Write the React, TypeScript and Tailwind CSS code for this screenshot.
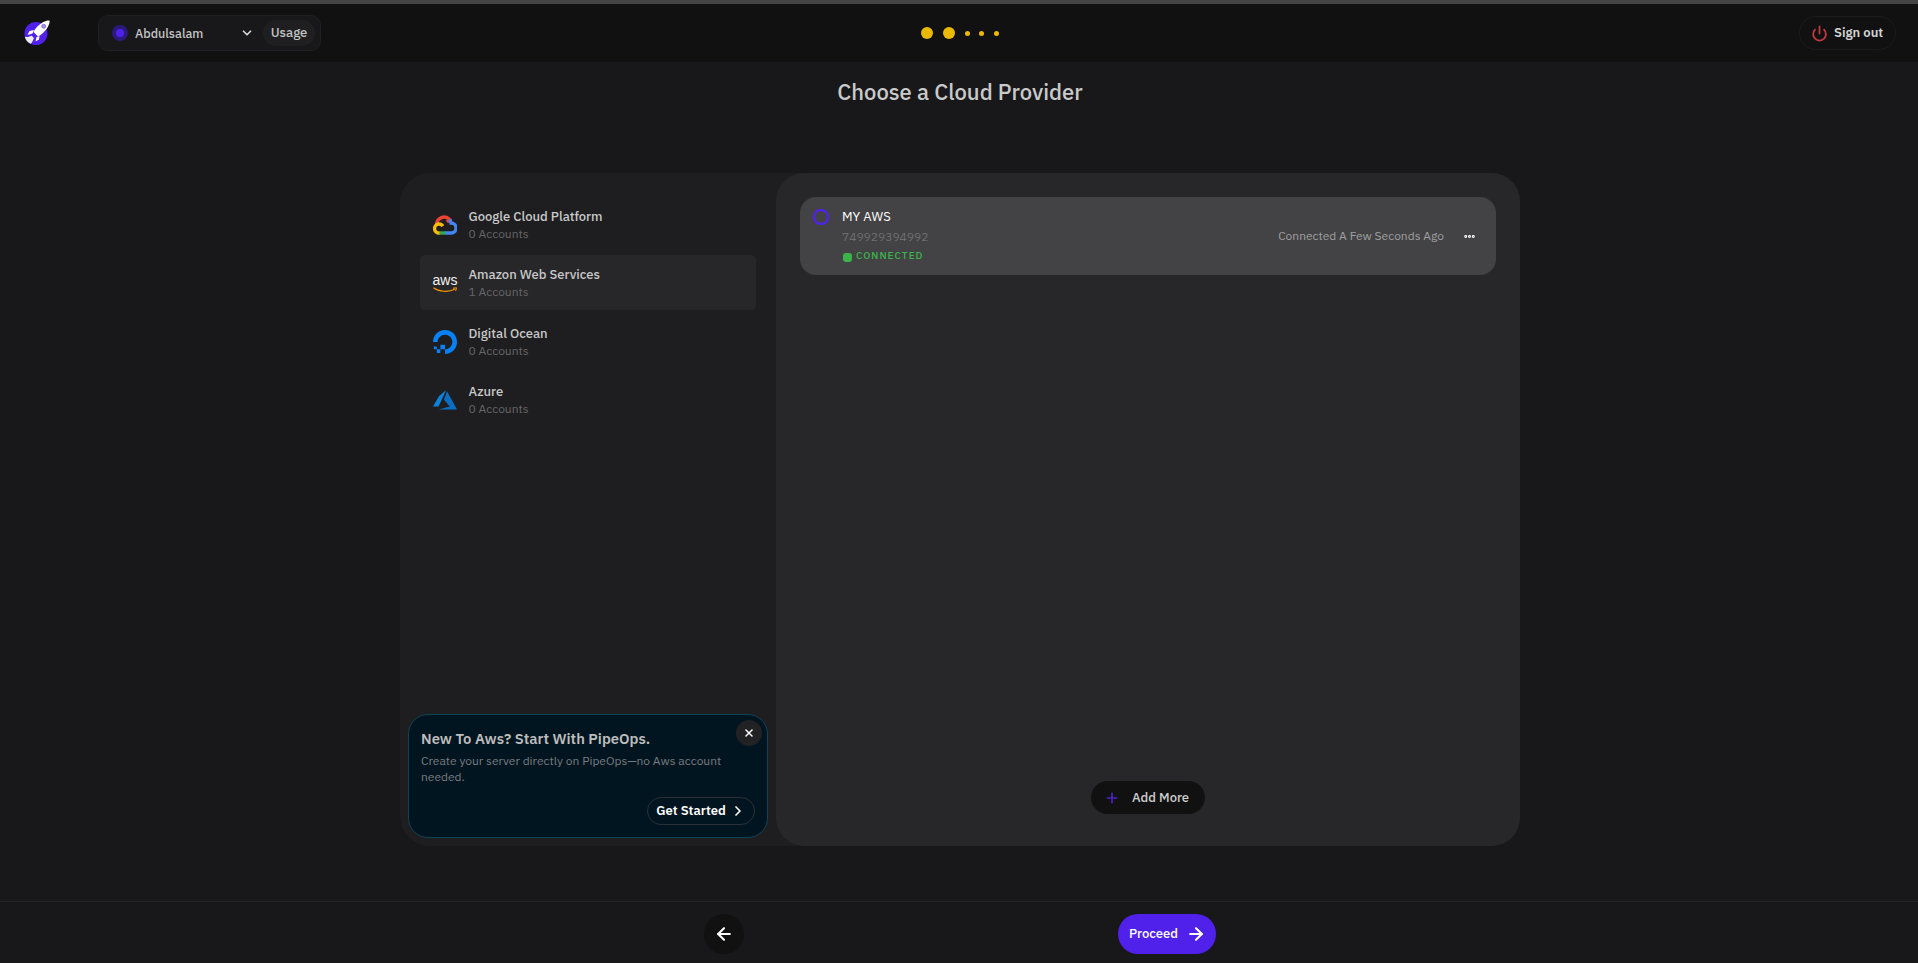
import { ChevronDown, ChevronRight, Power, Plus, X, Ellipsis, ArrowLeft, ArrowRight } from "lucide-react"
import { SiDigitalocean } from "react-icons/si"

const RocketLogo = () => (
    <svg viewBox="0 0 26 26" className="w-[26px] h-[26px]">
        <circle cx="12" cy="13.5" r="11.5" fill="#5021eb" />
        <path d="M9.5 12 C11 8 16 3.5 20.5 1.5 C22.5 0.6 25 0 25.5 0.8 C26 2 25 5 23.5 7.5 C21.5 11 18 14.5 14 16.5 Z" fill="#fff" />
        <circle cx="19.7" cy="6.3" r="2" fill="#a99bec" stroke="#5021eb" strokeWidth="0.5" />
        <path d="M10 10 L5.5 11 L3.5 15 L8.5 13.5 Z" fill="#fff" />
        <path d="M15.5 16 L15 19.5 L11.5 21.5 L12.5 17 Z" fill="#fff" />
        <path d="M0.8 16.5 C3 17.5 5 17 7.5 15.5 L10 18 C9 20.5 8 23 6.5 23.8 C3.5 22.5 1.2 19.5 0.8 16.5 Z" fill="#ecebf5" />
    </svg>
)

const GoogleCloudIcon = () => (
    <svg viewBox="0 0 24 20" className="w-6 h-5" fill="none" strokeWidth="3.4">
        <path d="M3.6 9.6 A7.6 7.6 0 0 1 16.6 4.4 L14 7" stroke="#ea4335" />
        <path d="M16.6 4.4 A7.6 7.6 0 0 1 18 8 A4.5 4.5 0 0 1 18.2 18 H12" stroke="#4285f4" />
        <path d="M12.4 18 H6" stroke="#34a853" />
        <path d="M6.4 18 A4.5 4.5 0 0 1 5.8 9 A4.5 4.5 0 0 1 9.8 11.2" stroke="#fbbc05" />
    </svg>
)

const AwsIcon = () => (
    <div className="w-6 flex flex-col items-center">
        <span className="text-[14px] leading-[13px] text-[#f2f2f2] font-['Liberation_Sans',sans-serif]">aws</span>
        <svg viewBox="0 0 24 6" className="w-6 h-[6px]" fill="none">
            <path d="M0.5 0.8 C6 5 16 5.4 22 2" stroke="#f90" strokeWidth="1.2" />
            <path d="M20 1.2 L23.5 0.8 L22.6 4" stroke="#f90" strokeWidth="1" />
        </svg>
    </div>
)

const AzureIcon = () => (
    <svg viewBox="0 0 24 20" className="w-6 h-5">
        <path d="M5.483 19.4H24L14.025 1.3l-3.038 8.347 5.836 6.938L5.483 19.4z" fill="#0a6fc2" />
        <path d="M13.23 0L6.105 5.977 0 16.553h5.505v.014L13.23 0z" fill="#0c82d8" />
    </svg>
)

const providers = [
    { name: "Google Cloud Platform", accounts: "0 Accounts", icon: <GoogleCloudIcon /> },
    { name: "Amazon Web Services", accounts: "1 Accounts", icon: <AwsIcon />, active: true },
    { name: "Digital Ocean", accounts: "0 Accounts", icon: <SiDigitalocean className="w-6 h-6 text-[#0a80f5]" /> },
    { name: "Azure", accounts: "0 Accounts", icon: <AzureIcon /> },
]

const App = () => {
    return (
        <div className="h-[963px] flex flex-col bg-[#18181a] font-['IBM_Plex_Sans','Noto_Sans',sans-serif] overflow-hidden">
            <div className="h-1 bg-[#454545]" />
            <header className="h-[58px] shrink-0 bg-[#111112] relative flex items-center justify-between pl-6 pr-[22px]">
                <div className="flex items-center">
                    <RocketLogo />
                    <div className="ml-12 w-[223px] h-9 rounded-[10px] border border-[#202022] bg-[#18181a] flex items-center pl-[13px] pr-[5px]">
                        <div className="w-4 h-4 rounded-full bg-[#2c1a7c] flex items-center justify-center">
                            <div className="w-2 h-2 rounded-full bg-[#5021eb]" />
                        </div>
                        <span className="ml-[7px] text-[12.5px] font-medium text-[#c4c4c4]">Abdulsalam</span>
                        <ChevronDown className="ml-auto mr-[9px] w-[14px] h-[14px] text-[#d4d4d4]" strokeWidth={3} />
                        <div className="w-[52px] h-[26px] rounded-full bg-[#1f1f21] flex items-center justify-center text-[13px] font-medium text-[#c4c4c4]">Usage</div>
                    </div>
                </div>
                <div className="absolute left-[921px] flex items-center">
                    <div className="w-3 h-3 rounded-full bg-[#eab900]" />
                    <div className="ml-[10px] w-3 h-3 rounded-full bg-[#eab900]" />
                    <div className="ml-[10px] w-[5px] h-[5px] rounded-full bg-[#eab900]" />
                    <div className="ml-[9px] w-[5px] h-[5px] rounded-full bg-[#eab900]" />
                    <div className="ml-[10px] w-[5px] h-[5px] rounded-full bg-[#eab900]" />
                </div>
                <button className="w-[97px] h-[34px] rounded-full border border-[#1c1c1e] flex items-center pl-[11px]">
                    <Power className="w-[17px] h-[17px] text-[#c43a3e]" strokeWidth={2.5} />
                    <span className="ml-[6px] text-[13px] font-semibold text-[#d4d4d4]">Sign out</span>
                </button>
            </header>
            <main className="flex-1 flex flex-col items-center">
                <h1 className="mt-4 ml-[2px] text-[22px] leading-7 font-medium text-[#cacaca]">Choose a Cloud Provider</h1>
                <div className="mt-[67px] ml-[2px] w-[1120px] h-[673px] flex bg-[#1e1e20] rounded-[30px]">
                    <div className="w-[376px] h-full flex flex-col pt-[23px] px-5 pb-[8px]">
                        <div className="flex flex-col gap-[3.5px]">
                            {providers.map((provider) => (
                                <div key={provider.name} className={`h-[55px] flex items-center pt-[2px] px-[13px] rounded-[5px] ${provider.active ? "bg-[#272729]" : ""}`}>
                                    <div className="w-6 flex justify-center">{provider.icon}</div>
                                    <div className="ml-[11.5px]">
                                        <div className="text-[13px] leading-[17px] font-medium text-[#c9c9c9]">{provider.name}</div>
                                        <div className="text-xs leading-[17px] text-[#666668]">{provider.accounts}</div>
                                    </div>
                                </div>
                            ))}
                        </div>
                        <div className="relative mt-auto -mx-3 h-[124px] rounded-[20px] bg-[#011520] border border-[#0e4458] pl-3 pr-3 pt-[14px] pb-3 flex flex-col">
                            <div className="text-[14.8px] leading-[20px] font-semibold text-[#bdbdbd]">New To Aws? Start With PipeOps.</div>
                            <div className="mt-1 text-xs leading-4 text-[#7a7d80] w-[310px]">Create your server directly on PipeOps—no Aws account needed.</div>
                            <button className="mt-auto self-end w-[108px] h-7 rounded-full border border-[#2a3237] flex items-center justify-center">
                                <span className="text-[13px] font-semibold text-white">Get Started</span>
                                <ChevronRight className="ml-1 w-4 h-4 text-white" strokeWidth={2.5} />
                            </button>
                            <button className="absolute top-[5px] right-[5px] w-[26px] h-[26px] rounded-full bg-[#222224] flex items-center justify-center">
                                <X className="w-3 h-3 text-white" strokeWidth={3} />
                            </button>
                        </div>
                    </div>
                    <div className="flex-1 bg-[#272729] rounded-[28px] pt-6 px-6 pb-[32px] flex flex-col">
                        <div className="h-[78px] rounded-2xl bg-[#434345] flex pl-[13px] pr-5">
                            <svg viewBox="0 0 16 16" className="mt-3 w-4 h-4 shrink-0" fill="none">
                                <circle cx="8" cy="8" r="7" stroke="#4f22f0" strokeWidth="2.2" />
                            </svg>
                            <div className="ml-[13px] mt-[10px]">
                                <div className="text-[13px] leading-[19px] text-white">MY AWS</div>
                                <div className="mt-[1px] text-xs leading-[19px] text-[#6e6e70]">749929394992</div>
                                <div className="flex items-center mt-[1px]">
                                    <div className="w-[9px] h-[9px] rounded-[3px] bg-[#3bb54a] mt-[2px] ml-[1px]" />
                                    <span className="ml-1 text-[10px] leading-[18px] font-medium tracking-[1px] text-[#3bb54a]">CONNECTED</span>
                                </div>
                            </div>
                            <div className="ml-auto flex items-center">
                                <span className="text-xs text-[#a0a0a2]">Connected A Few Seconds Ago</span>
                                <Ellipsis className="ml-[19px] w-[13px] h-[13px] text-white" strokeWidth={3.5} />
                            </div>
                        </div>
                        <button className="mt-auto self-center w-[114px] h-[33px] rounded-full bg-[#111112] flex items-center pl-[13px]">
                            <Plus className="w-4 h-4 text-[#4c22c8]" strokeWidth={2.5} />
                            <span className="ml-3 text-[13px] font-medium text-[#cfcfcf]">Add More</span>
                        </button>
                    </div>
                </div>
                <footer className="mt-auto w-full h-[62px] border-t border-[#232325] flex justify-center pt-3">
                    <div className="ml-[2px] w-[512px] flex items-start justify-between">
                        <button className="w-10 h-10 rounded-full bg-[#111112] flex items-center justify-center">
                            <ArrowLeft className="w-5 h-5 text-white" strokeWidth={2.5} />
                        </button>
                        <button className="w-[98px] h-10 rounded-full bg-[#5021eb] flex items-center pl-[11px]">
                            <span className="text-[13px] font-medium text-white">Proceed</span>
                            <ArrowRight className="ml-2 w-5 h-5 text-white" strokeWidth={2.5} />
                        </button>
                    </div>
                </footer>
            </main>
        </div>
    )
}

export default App
